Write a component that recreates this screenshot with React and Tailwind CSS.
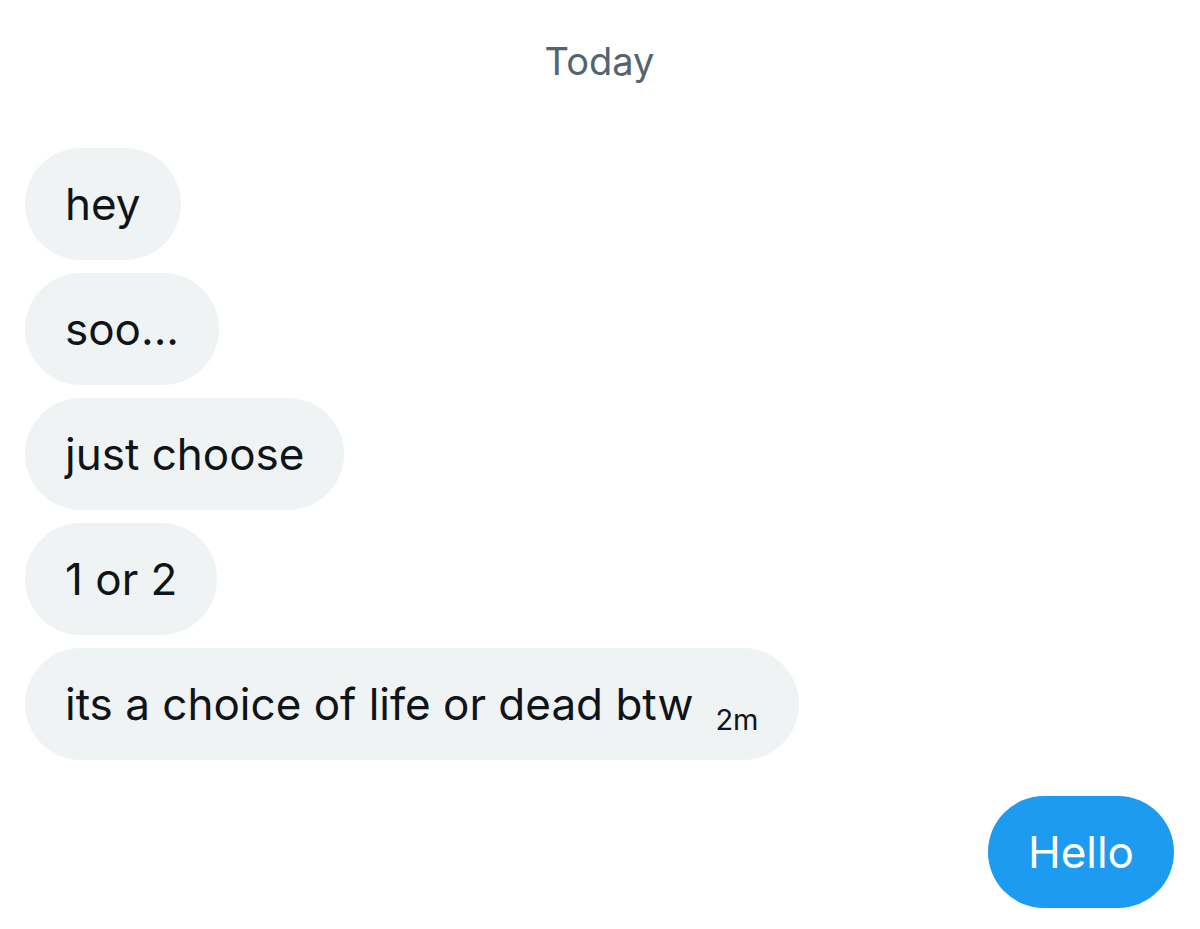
import React from "react";

const messages = ["hey", "soo...", "just choose", "1 or 2"];

const Bubble = ({ children, mine = false }) => (
  <div
    className={`h-[112px] flex items-center rounded-full px-[40px] text-[44px] ${
      mine ? "bg-[#1d9bf0] text-white" : "bg-[#eff3f4] text-[#0f1419]"
    }`}
  >
    {children}
  </div>
);

const App = () => {
  return (
    <div
      className="w-[1200px] h-[929px] bg-white flex flex-col pl-[25px] pr-[26px] overflow-hidden"
      style={{ fontFamily: "Inter, 'Liberation Sans', sans-serif" }}
    >
      {/* Day separator */}
      <div className="h-[148px] flex justify-center pt-[36px]">
        <span className="text-[38px] leading-[50px] text-[#536471]">Today</span>
      </div>

      {/* Incoming messages */}
      <div className="flex flex-col items-start gap-[13px]">
        {messages.map((m) => (
          <Bubble key={m}>{m}</Bubble>
        ))}
        <Bubble>
          <span>its a choice of life or dead btw</span>
          <span className="ml-[22px] mt-[32px] text-[29px]">2m</span>
        </Bubble>
      </div>

      {/* Outgoing */}
      <div className="mt-[36px] flex justify-end">
        <Bubble mine>Hello</Bubble>
      </div>
    </div>
  );
};

export default App;
